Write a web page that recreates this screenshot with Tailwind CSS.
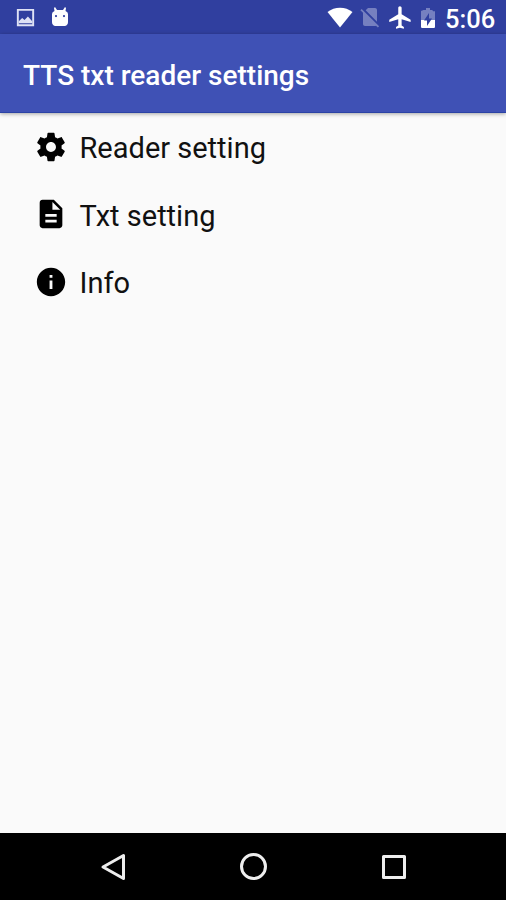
<!DOCTYPE html>
<html lang="en">
<head>
<meta charset="utf-8">
<title>TTS txt reader settings</title>
<script src="https://cdn.jsdelivr.net/npm/@tailwindcss/browser@4"></script>
</head>
<body class="w-[506px] h-[900px] overflow-hidden flex flex-col bg-[#fafafa] font-['Roboto',sans-serif]">
<div class="h-[34px] shrink-0 bg-[#303f9f] flex items-center pl-[14px] pr-[11px] text-white">
  <svg class="size-[23px]" viewBox="0 0 24 24" fill="#dfe2f5"><path d="M21 3H3v18h18V3zM5 5h14v14H5z" fill-rule="evenodd"/><path d="M5 18v-2l3.500-3.500 2.500 2 3.500-3.500 4.500 5v2z"/></svg>
  <svg class="ml-[13px] w-[20px] h-[22px]" viewBox="0 0 20 22" fill="#fff"><path fill-rule="evenodd" d="M2 8q0-2 2.500-3L4 2l1-1 2 3h6l2-3 1 1-.5 3Q18 6 18 8v8q0 3-3 4H5q-3-1-3-4zM6 9a1.100 1.100 0 1 0 0 2.200A1.100 1.100 0 0 0 6 9zm8 0a1.100 1.100 0 1 0 0 2.200A1.100 1.100 0 0 0 14 9z"/></svg>
  <div class="flex-1"></div>
  <svg class="w-[26px] h-[21px]" viewBox="0 0 26 21" fill="#fff"><path d="M13 20.500L.5 5Q6 .7 13 .7T25.500 5z"/></svg>
  <svg class="ml-[5px] size-[24px]" viewBox="0 0 24 24" fill="#7680c0"><path d="M19 5c0-1.100-.9-2-2-2h-7L7.660 5.340 19 16.680V5zM3.650 3.880L2.380 5.150 5 7.770V19c0 1.100.9 2 2 2h10.010c.35 0 .67-.1.960-.26l1.880 1.880 1.270-1.270L3.650 3.880z"/></svg>
  <svg class="ml-[5px] size-[27px]" viewBox="0 0 24 24" fill="#fff"><path d="M21 16v-2l-8-5V3.500c0-.83-.67-1.500-1.500-1.500S10 2.670 10 3.500V9l-8 5v2l8-2.500V19l-2 1.500V22l3.500-1 3.500 1v-1.500L13 19v-5.500l8 2.500z"/></svg>
  <svg class="ml-[2px] mt-[2px] size-[24px]" viewBox="0 0 24 24"><path fill="#7680c0" d="M17 5.330C17 4.600 16.400 4 15.670 4H14V2h-4v2H8.330C7.600 4 5 4.600 5 5.330V14h14V5.330z"/><path fill="#fff" d="M5 14v6.670C5 21.400 5.600 22 6.330 22h11.330c.74 0 1.340-.6 1.340-1.330V14z"/><path fill="#303f9f" d="M11 20v-5.500H8L13 7v5.500h3z"/></svg>
  <div class="ml-[5px] w-[50px] text-[25.500px] leading-none font-medium whitespace-nowrap pt-[6px]">5:06</div>
</div>
<header class="h-[79px] shrink-0 bg-[#3f51b5] border-b border-[#2b43a5] flex items-center pl-[23px] pt-[5px] shadow-[0_1px_4px_rgba(0,0,0,0.35)] text-white font-medium whitespace-nowrap"><h1 class="text-[28px]">TTS txt reader settings</h1></header>
<main class="flex-1 text-[29px] text-[#111]">
  <div class="h-[67.500px] flex items-center pl-[34px] gap-[11.500px]">
    <svg class="size-[34px]" viewBox="0 0 24 24" fill="#000"><path d="M19.430 12.980c.04-.32.07-.64.07-.98s-.03-.66-.07-.98l2.110-1.650c.19-.15.24-.42.12-.64l-2-3.460c-.12-.22-.39-.3-.61-.22l-2.490 1c-.52-.4-1.080-.73-1.690-.98l-.38-2.650C14.460 2.180 14.250 2 14 2h-4c-.25 0-.46.18-.49.42l-.38 2.650c-.61.25-1.170.59-1.690.98l-2.490-1c-.23-.09-.49 0-.61.220l-2 3.460c-.13.22-.07.49.12.640l2.110 1.650c-.04.32-.07.65-.07.980s.03.66.07.980l-2.110 1.650c-.19.15-.24.42-.12.640l2 3.460c.12.22.39.3.61.220l2.490-1c.52.4 1.080.73 1.690.980l.38 2.650c.03.24.24.420.49.420h4c.25 0 .46-.18.490-.420l.38-2.650c.61-.25 1.170-.59 1.690-.980l2.490 1c.23.09.49 0 .61-.220l2-3.460c.12-.22.07-.49-.12-.640l-2.110-1.650zM12 15.500c-1.930 0-3.500-1.570-3.500-3.500s1.570-3.500 3.500-3.500 3.500 1.570 3.500 3.500-1.570 3.500-3.500 3.500z"/></svg>
    <span class="pt-[4px]">Reader setting</span>
  </div>
  <div class="h-[67.500px] flex items-center pl-[34px] gap-[11.500px]">
    <svg class="size-[34px]" viewBox="0 0 24 24" fill="#000"><path d="M14 2H6c-1.100 0-1.990.9-1.990 2L4 20c0 1.100.89 2 1.990 2H18c1.100 0 2-.9 2-2V8l-6-6zm2 16H8v-2h8v2zm0-4H8v-2h8v2zm-3-5V3.500L18.500 9H13z"/></svg>
    <span class="pt-[4px]">Txt setting</span>
  </div>
  <div class="h-[67.500px] flex items-center pl-[34px] gap-[11.500px]">
    <svg class="size-[34px]" viewBox="0 0 24 24" fill="#000"><path d="M12 2C6.480 2 2 6.480 2 12s4.480 10 10 10 10-4.480 10-10S17.520 2 12 2zm1 15h-2v-6h2v6zm0-8h-2V7h2v2z"/></svg>
    <span class="pt-[4px]">Info</span>
  </div>
</main>
<nav class="h-[67px] shrink-0 bg-black flex items-center justify-center gap-[112px] pl-[2px]">
  <svg class="size-[28px]" viewBox="0 0 28 28" fill="none" stroke="#eee" stroke-width="3" stroke-linejoin="round"><path d="M23.500 2.500v23L3 14z"/></svg>
  <svg class="size-[28px]" viewBox="0 0 28 28" fill="none" stroke="#eee" stroke-width="3"><circle cx="13.500" cy="13.500" r="12"/></svg>
  <svg class="size-[28px]" viewBox="0 0 28 28" fill="none" stroke="#eee" stroke-width="3" stroke-linejoin="round"><rect x="3.500" y="3.500" width="21" height="21"/></svg>
</nav>
</body>
</html>
